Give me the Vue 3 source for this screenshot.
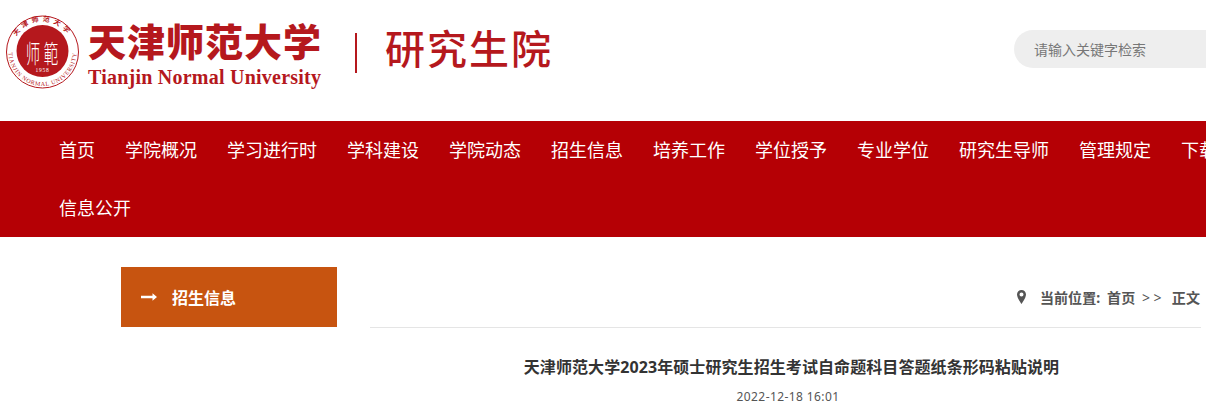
<template>
  <div class="page">
    <header class="top">
      <svg class="seal" width="85" height="100" viewBox="0 0 85 100">
        <defs>
          <path id="ringTop" d="M 12 52 A 30.500 30.500 0 0 1 73 52" />
          <path id="ringBottom" d="M 8.500 52 A 34 34 0 0 0 76.500 52" />
        </defs>
        <circle cx="42.500" cy="52" r="36" fill="#fff" stroke="#b5181d" stroke-width="1" />
        <circle cx="42.500" cy="51" r="26" fill="#b5181d" />
        <text class="ring-cn" text-anchor="middle">
          <textPath href="#ringTop" startOffset="50%">天津师范大学</textPath>
        </text>
        <text class="ring-en" text-anchor="middle">
          <textPath href="#ringBottom" startOffset="50%">TIANJIN NORMAL UNIVERSITY</textPath>
        </text>
        <text class="seal-cn" transform="translate(33 63) scale(0.85 1.500)" text-anchor="middle">师</text>
        <text class="seal-cn" transform="translate(51 63) scale(0.85 1.500)" text-anchor="middle">範</text>
        <text class="seal-year" x="42.500" y="72" text-anchor="middle">1958</text>
      </svg>
      <div class="brand">
        <div class="brand-cn">天津师范大学</div>
        <div class="brand-en">Tianjin Normal University</div>
      </div>
      <div class="divider"></div>
      <div class="site-name">研究生院</div>
      <input class="search" type="text" placeholder="请输入关键字检索" />
    </header>

    <nav class="nav">
      <a v-for="item in navItems" :key="item" class="nav-item">{{ item }}</a>
    </nav>

    <section class="body">
      <aside class="side">
        <div class="side-head">
          <svg width="16" height="10" viewBox="0 0 16 10">
            <path d="M0 3.800h11.500V1.200L16 5l-4.500 3.800V6.200H0z" fill="#fff" />
          </svg>
          <span>招生信息</span>
        </div>
      </aside>
      <main class="main">
        <div class="crumb">
          <svg width="9" height="14" viewBox="0 0 9 14">
            <path d="M4.500 0C2 0 0 2 0 4.500 0 7.800 4.500 14 4.500 14S9 7.800 9 4.500C9 2 7 0 4.500 0zm0 6.500a2 2 0 1 1 0-4 2 2 0 0 1 0 4z" fill="#555" />
          </svg>
          <span class="crumb-text">当前位置: 首页 <span class="crumb-sep">&gt;&gt;</span> 正文</span>
        </div>
        <h1 class="title">天津师范大学2023年硕士研究生招生考试自命题科目答题纸条形码粘贴说明</h1>
        <div class="date">2022-12-18 16:01</div>
      </main>
    </section>
  </div>
</template>

<script setup>
const navItems = [
  '首页', '学院概况', '学习进行时', '学科建设', '学院动态', '招生信息',
  '培养工作', '学位授予', '专业学位', '研究生导师', '管理规定', '下载中心',
  '信息公开'
]
</script>

<style>
html, body {
  margin: 0;
  overflow: hidden;
  background: #fff;
}
</style>

<style scoped>
.page {
  width: 1206px;
  height: 413px;
  overflow: hidden;
  font-family: "Noto Sans", "Noto Sans CJK SC", sans-serif;
}

.top {
  display: flex;
  align-items: flex-start;
  width: 1300px;
  height: 121px;
}

.seal {
  flex: none;
  margin-right: 3px;
}

.ring-cn {
  font-size: 7px;
  font-weight: 700;
  letter-spacing: 3.500px;
  fill: #b5181d;
}

.ring-en {
  font-family: "Liberation Serif", serif;
  font-size: 6px;
  letter-spacing: 0.700px;
  fill: #b5181d;
}

.seal-cn {
  font-size: 17px;
  font-weight: 300;
  fill: #fff;
}

.seal-year {
  font-family: "Liberation Serif", serif;
  font-size: 5.500px;
  letter-spacing: 0.800px;
  fill: #fff;
}

.brand {
  width: 267px;
  flex: none;
  color: #b5181d;
}

.brand-cn {
  margin-top: 17px;
  height: 50px;
  font-size: 38px;
  font-weight: 900;
  line-height: 48px;
  letter-spacing: 1px;
  white-space: nowrap;
}

.brand-en {
  font-family: "Liberation Serif", serif;
  font-size: 20px;
  font-weight: 700;
  line-height: 20px;
  letter-spacing: 0.230px;
  white-space: nowrap;
}

.divider {
  flex: none;
  width: 2px;
  height: 40px;
  margin-top: 33px;
  background: #b5181d;
}

.site-name {
  flex: none;
  margin: 20px 0 0 28px;
  font-size: 40px;
  font-weight: 500;
  line-height: 58px;
  letter-spacing: 2px;
  color: #b5181d;
  white-space: nowrap;
}

.search {
  flex: none;
  box-sizing: border-box;
  width: 280px;
  height: 38px;
  margin: 30px 0 0 461px;
  padding: 0 20px;
  border: 0;
  border-radius: 19px;
  outline: 0;
  background: #eee;
  font-family: inherit;
  font-size: 14px;
}

.search::placeholder {
  color: #777;
  opacity: 1;
}

.nav {
  display: flex;
  flex-wrap: wrap;
  column-gap: 30px;
  box-sizing: border-box;
  width: 1300px;
  height: 116px;
  padding: 0 0 0 59px;
  background: #b50005;
}

.nav-item {
  font-size: 18px;
  line-height: 58px;
  color: #fff;
  white-space: nowrap;
}

.body {
  display: flex;
  align-items: flex-start;
  padding: 30px 0 0 121px;
}

.side {
  flex: none;
  width: 216px;
  margin-right: 33px;
}

.side-head {
  display: flex;
  align-items: center;
  gap: 15px;
  height: 60px;
  padding-left: 20px;
  background: #c75410;
  font-size: 16px;
  font-weight: 700;
  color: #fff;
}

.main {
  flex: none;
  width: 831px;
}

.crumb {
  display: flex;
  align-items: center;
  justify-content: flex-end;
  gap: 14px;
  box-sizing: border-box;
  height: 61px;
  padding: 0 1px 1px 0;
  border-bottom: 1px solid #e5e5e5;
  font-size: 14px;
  font-weight: 700;
  color: #555;
}

.crumb-text {
  word-spacing: 3px;
  letter-spacing: 0.100px;
}

.crumb-sep {
  font-weight: 400;
  letter-spacing: 3.500px;
}

.title {
  margin: 27px -12px 0 0;
  font-size: 16px;
  font-weight: 700;
  line-height: 24px;
  letter-spacing: 0.080px;
  text-align: center;
  color: #333;
}

.date {
  margin-top: 9px;
  margin-right: -5px;
  font-size: 12px;
  line-height: 18px;
  letter-spacing: 0.400px;
  text-align: center;
  color: #555;
}
</style>
